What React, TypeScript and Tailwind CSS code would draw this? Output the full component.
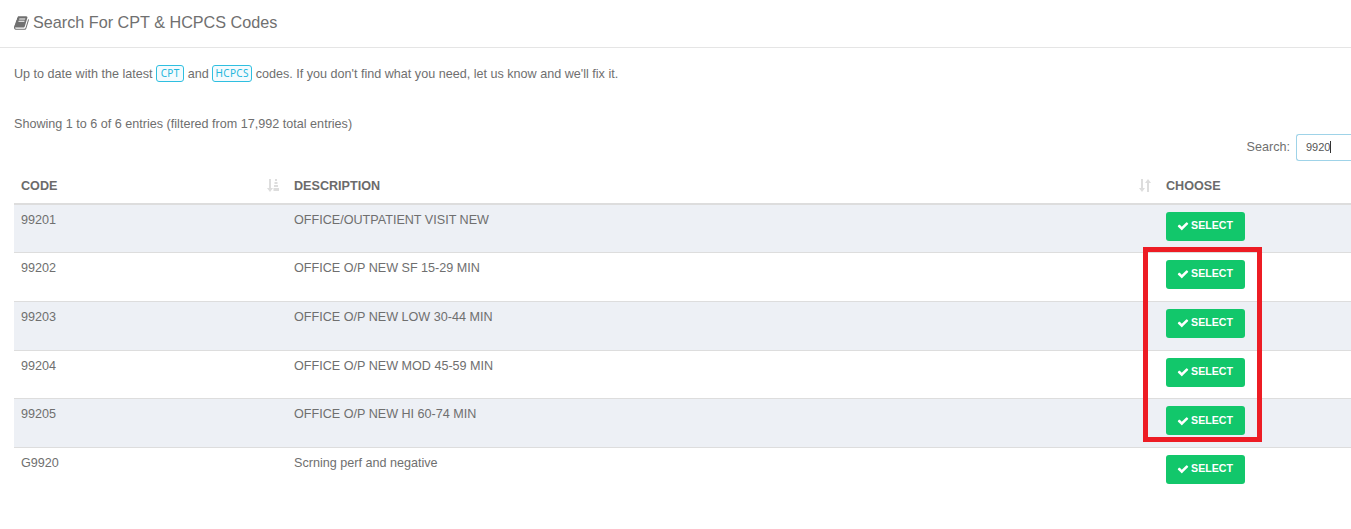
const ROWS = [
  { code: "99201", desc: "OFFICE/OUTPATIENT VISIT NEW" },
  { code: "99202", desc: "OFFICE O/P NEW SF 15-29 MIN" },
  { code: "99203", desc: "OFFICE O/P NEW LOW 30-44 MIN" },
  { code: "99204", desc: "OFFICE O/P NEW MOD 45-59 MIN" },
  { code: "99205", desc: "OFFICE O/P NEW HI 60-74 MIN" },
  { code: "G9920", desc: "Scrning perf and negative" },
];

function BookIcon() {
  return (
    <svg width="16" height="16" viewBox="0 0 1792 1792" fill="currentColor">
      <path d="M1639 478q40 57 18 129l-275 906q-19 64-76.5 107.5t-122.5 43.5h-923q-77 0-148.5-53.5t-99.5-131.5q-24-67-2-127 0-4 3-27t4-37q1-8-3-21.5t-3-19.5q2-11 8-21t16.5-23.5 16.5-23.5q23-38 45-91.5t30-91.5q3-10 .5-30t-.5-28q3-11 17-28t17-23q21-36 42-92t25-90q1-9-2.5-32t.5-28q4-13 22-30.5t22-22.5q19-26 42.5-84.5t27.5-96.5q1-8-3-25.5t-2-26.5q2-8 9-18t18-23 17-21q8-12 16.5-30.5t15-35 16-36 19.5-32 26.5-23.5 36-11.5 47.5 5.5l-1 3q38-9 51-9h761q74 0 114 56t18 130l-274 906q-36 119-71.5 153.5t-128.5 34.5h-869q-27 0-38 15-11 16-1 43 24 70 144 70h923q29 0 56-15.5t35-41.5l300-987q7-22 5-57 38 15 59 43zm-1064 2q-4 13 2 22.5t20 9.5h608q13 0 25.5-9.5t16.5-22.5l21-64q4-13-2-22.5t-20-9.5h-608q-13 0-25.5 9.5t-16.5 22.5zm-83 256q-4 13 2 22.5t20 9.5h608q13 0 25.5-9.5t16.5-22.5l21-64q4-13-2-22.5t-20-9.5h-608q-13 0-25.5 9.5t-16.5 22.5z" />
    </svg>
  );
}

function CheckIcon() {
  return (
    <svg width="12" height="12" viewBox="0 0 1792 1792" fill="currentColor">
      <path d="M1671 566q0 40-28 68l-724 724-136 136q-28 28-68 28t-68-28l-136-136-362-362q-28-28-28-68t28-68l136-136q28-28 68-28t68 28l294 295 656-657q28-28 68-28t68 28l136 136q28 28 28 68z" />
    </svg>
  );
}

function SortActive() {
  return (
    <svg width="12" height="13" viewBox="0 0 12 13" className="text-[#dddddd]" fill="currentColor">
      <path d="M2 0h2v9h2l-3 4-3-4h2z" />
      <path d="M8 0h2v2H8zM7.5 3h3v2h-3zM7 6h4v2H7zM6.5 9h5.5v3H6.5z" />
    </svg>
  );
}

function SortBoth() {
  return (
    <svg width="12" height="13" viewBox="0 0 12 13" className="text-[#dddddd]" fill="currentColor">
      <path d="M2 0h2v9h2l-3 4-3-4h2z" />
      <path d="M8 13h2V4h2L9 0 6 4h2z" />
    </svg>
  );
}

function Badge({ label, width }: { label: string; width: string }) {
  return (
    <span className={`flex h-[17px] items-center justify-center rounded-[3px] border border-[#2fbfe0] bg-[#f4fbfe] font-['Noto_Sans',sans-serif] text-[10px] tracking-[0.3px] text-[#23b7dc] ${width}`}>
      {label}
    </span>
  );
}

export default function App() {
  return (
    <div className="relative h-[529px] w-[1351px] overflow-hidden bg-white font-['Liberation_Sans',sans-serif] text-[12.6px] text-[#6f6f6f]">
      {/* Title */}
      <div className="flex h-[48px] items-center gap-[3px] border-b border-[#e5e5e5] pb-[2px] pl-[14px] text-[16.2px] text-[#707070]">
        <BookIcon />
        <span>Search For CPT &amp; HCPCS Codes</span>
      </div>

      <div className="pl-[14px]">
        <p className="mt-[17px] flex h-[17px] items-center gap-[3.5px] whitespace-pre">
          <span className="pt-[1px]">Up to date with the latest</span>
          <Badge label="CPT" width="w-[28px]" />
          <span className="pt-[1px]">and</span>
          <Badge label="HCPCS" width="w-[40px]" />
          <span className="pt-[1px]">codes. If you don't find what you need, let us know and we'll fix it.</span>
        </p>
        <p className="mt-[34px] h-[17px] leading-[17px]">Showing 1 to 6 of 6 entries (filtered from 17,992 total entries)</p>

        <div className="flex h-[28px] items-center justify-end">
          <span className="mr-[6px]">Search:</span>
          <div className="flex h-[27px] w-[55px] items-center rounded-l-[3px] border border-r-0 border-[#9fd3e8] pl-[9px] text-[11px] text-[#555555]">
            9920<span className="h-[12px] w-px bg-[#333333]" />
          </div>
        </div>

        <table className="mt-[7px] w-[1337px] table-fixed border-collapse">
          <thead>
            <tr className="h-[36px] border-b-2 border-[#dddddd] text-left text-[#6b6b6b]">
              <th className="w-[273px] pl-[7px] pr-[8px] pt-[1px] font-bold">
                <div className="flex items-center justify-between">
                  CODE
                  <SortActive />
                </div>
              </th>
              <th className="w-[872px] pl-[7px] pr-[8px] pt-[1px] font-bold">
                <div className="flex items-center justify-between">
                  DESCRIPTION
                  <SortBoth />
                </div>
              </th>
              <th className="px-[7px] pt-[1px] font-bold">CHOOSE</th>
            </tr>
          </thead>
          <tbody>
            {ROWS.map((row, idx) => (
              <tr key={row.code} className={`h-[48.7px] border-b border-[#dddddd] align-top last:border-b-0 ${idx % 2 === 0 ? "bg-[#edf0f5]" : "bg-white"}`}>
                <td className="px-[7px] pt-[6px]">{row.code}</td>
                <td className="px-[7px] pt-[6px]">{row.desc}</td>
                <td className="px-[7px] pt-[7px]">
                  <button className="flex h-[29px] w-[79px] items-center justify-center gap-[2px] rounded-[3px] bg-[#12c76b] pb-[0.5px] pr-[1px] text-[10.6px] font-bold text-white">
                    <CheckIcon />
                    SELECT
                  </button>
                </td>
              </tr>
            ))}
          </tbody>
        </table>
      </div>

      {/* Annotation box around the select buttons */}
      <div className="absolute left-[1143px] top-[247px] h-[195px] w-[119px] border-[5px] border-[#ed1c24]" />
    </div>
  );
}
